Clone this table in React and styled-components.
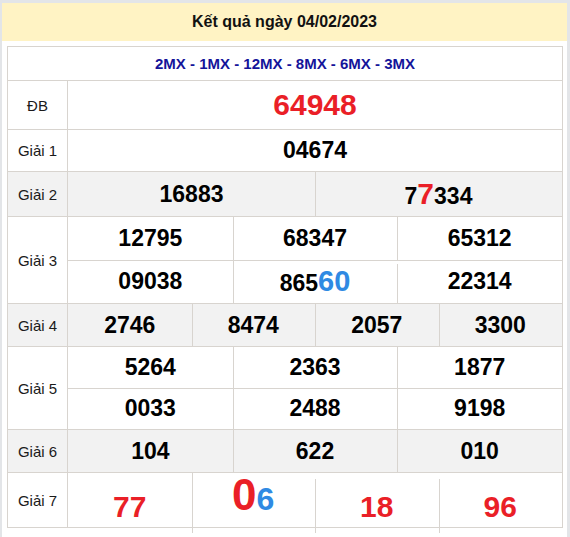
import React from 'react'
import styled, { createGlobalStyle } from 'styled-components'

const GlobalStyle = createGlobalStyle`
  body {
    margin: 0;
    background: #fff;
    font-family: "Liberation Sans", Arial, sans-serif;
  }
`

const RED = '#ea1f27'
const BLUE = '#2f8ae3'
const LINE = '#d8d4cf'

const rows = [
  { label: 'Giải 1', h: 42, lines: [[['04674']]] },
  { label: 'Giải 2', h: 45, gray: true, lines: [[['16883'], ['7', { t: '7', c: RED, s: 30 }, '334']]] },
  {
    label: 'Giải 3',
    h: 87,
    lines: [
      [['12795'], ['68347'], ['65312']],
      [['09038'], ['865', { t: '60', c: BLUE, s: 29 }], ['22314']],
    ],
    gaps: [[0, 0, 0], [0, 0, 3]],
  },
  { label: 'Giải 4', h: 43, gray: true, lines: [[['2746'], ['8474'], ['2057'], ['3300']]] },
  {
    label: 'Giải 5',
    h: 83,
    lines: [
      [['5264'], ['2363'], ['1877']],
      [['0033'], ['2488'], ['9198']],
    ],
  },
  { label: 'Giải 6', h: 43, gray: true, lines: [[['104'], ['622'], ['010']]] },
]

const Lottery = () => {
  return (
    <Frame>
      <Title>Kết quả ngày 04/02/2023</Title>
      <Body>
        <Table>
          <Row $h={33}>
            <Provinces>2MX - 1MX - 12MX - 8MX - 6MX - 3MX</Provinces>
          </Row>
          <Row $h={49}>
            <Label>ĐB</Label>
            <Content>
              <SubRow>
                <Cell>
                  <Num $size={30} $color={RED}>64948</Num>
                </Cell>
              </SubRow>
            </Content>
          </Row>
          {rows.map((r) => (
            <Row key={r.label} $h={r.h} $gray={r.gray}>
              <Label>{r.label}</Label>
              <Content>
                {r.lines.map((line, i) => (
                  <SubRow key={i}>
                    {line.map((parts, j) => (
                      <Cell key={j} $gap={r.gaps ? r.gaps[i][j] : 0}>
                        <Num>
                          {parts.map((p, k) =>
                            typeof p === 'string' ? (
                              p
                            ) : (
                              <Part key={k} $color={p.c} $size={p.s}>{p.t}</Part>
                            )
                          )}
                        </Num>
                      </Cell>
                    ))}
                  </SubRow>
                ))}
              </Content>
            </Row>
          ))}
          {/* Giải 7 */}
          <Row $h={55}>
            <Label>Giải 7</Label>
            <Content>
              <SubRow>
                <Cell $end $pb={11}>
                  <Num $size={30} $color={RED} $lh={1}>77</Num>
                </Cell>
                <Cell $end $pb={16}>
                  <Num $size={44} $color={RED} $lh={1}>
                    0<Part $color={BLUE} $size={32}>6</Part>
                  </Num>
                </Cell>
                <Cell $end $pb={11} $gap={6}>
                  <Num $size={30} $color={RED} $lh={1}>18</Num>
                </Cell>
                <Cell $end $pb={11} $gap={6}>
                  <Num $size={30} $color={RED} $lh={1}>96</Num>
                </Cell>
              </SubRow>
            </Content>
          </Row>
        </Table>
      </Body>
    </Frame>
  )
}

const Frame = styled.div`
  width: 570px;
  height: 537px;
  box-sizing: border-box;
  border-top: 3px solid #e3e5e8;
  border-left: 2px solid #e3e5e8;
  border-right: 3px solid #e3e5e8;
  overflow: hidden;
`
const Title = styled.div`
  height: 38px;
  background: #fff3c4;
  display: flex;
  align-items: center;
  justify-content: center;
  font-size: 16px;
  font-weight: bold;
  color: #111;
`
const Body = styled.div`
  padding: 5px 4px 0 5px;
`
const Table = styled.div`
  border: 1px solid ${LINE};
`
const Row = styled.div`
  display: flex;
  box-sizing: border-box;
  height: ${(p) => p.$h}px;
  background: ${(p) => (p.$gray ? '#f2f2f2' : '#fff')};
  &:not(:first-child) {
    border-top: 1px solid ${LINE};
  }
`
const Provinces = styled.div`
  flex: 1;
  display: flex;
  align-items: center;
  justify-content: center;
  font-size: 15px;
  font-weight: bold;
  color: #14149a;
`
const Label = styled.div`
  width: 60px;
  flex: none;
  box-sizing: border-box;
  border-right: 1px solid ${LINE};
  display: flex;
  align-items: center;
  justify-content: center;
  font-size: 15px;
  color: #1a1a1a;
`
const Content = styled.div`
  flex: 1;
  display: flex;
  flex-direction: column;
`
const SubRow = styled.div`
  flex: 1;
  display: flex;
  &:not(:first-child) {
    border-top: 1px solid ${LINE};
  }
`
const Cell = styled.div`
  flex: 1;
  position: relative;
  display: flex;
  justify-content: center;
  align-items: ${(p) => (p.$end ? 'flex-end' : 'center')};
  padding-bottom: ${(p) => p.$pb || 0}px;
  &:not(:first-child)::before {
    content: '';
    position: absolute;
    left: 0;
    top: ${(p) => p.$gap || 0}px;
    bottom: 0;
    border-left: 1px solid ${LINE};
  }
`
const Num = styled.span`
  font-size: ${(p) => p.$size || 23}px;
  font-weight: bold;
  line-height: ${(p) => p.$lh || 'normal'};
  color: ${(p) => p.$color || '#000'};
`
const Part = styled.span`
  font-size: ${(p) => p.$size}px;
  color: ${(p) => p.$color};
`

export default function App() {
  return (
    <>
      <GlobalStyle />
      <Lottery />
    </>
  )
}
